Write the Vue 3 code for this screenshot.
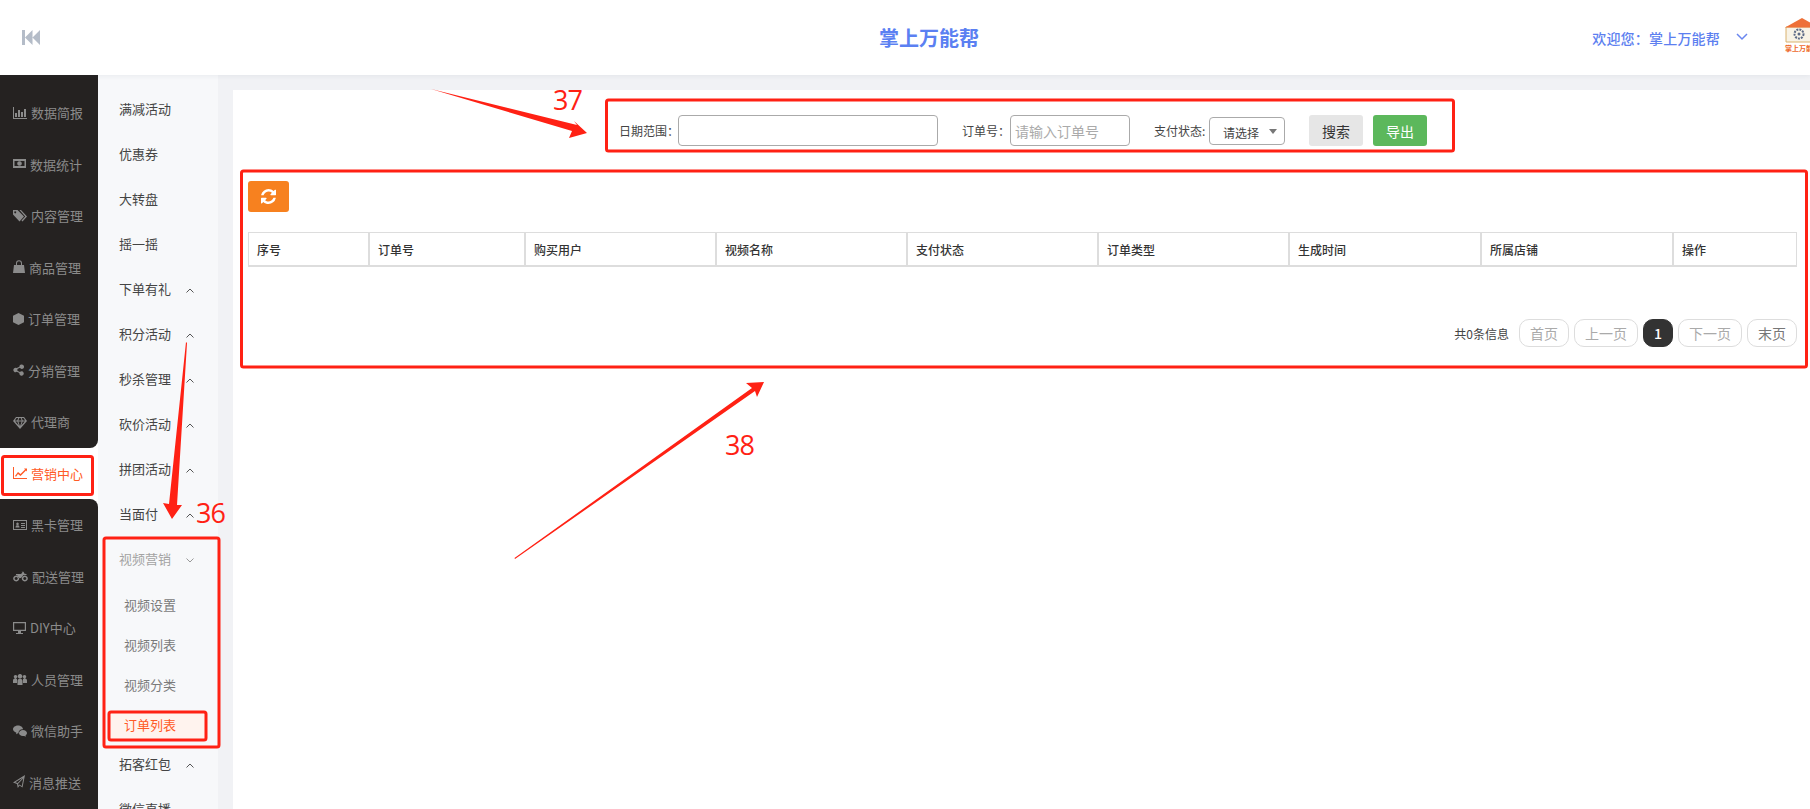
<script setup>
const refreshPath = 'M1511 928q0 5-1 7-64 268-268 434.5t-478 166.5q-146 0-282.5-55t-243.5-157l-129 129q-19 19-45 19t-45-19-19-45v-448q0-26 19-45t45-19h448q26 0 45 19t19 45-19 45l-137 137q71 66 161 102t187 36q134 0 250-65t186-179q11-17 53-117 8-23 30-23h192q13 0 22.5 9.5t9.5 22.5zm25-800v448q0 26-19 45t-45 19h-448q-26 0-45-19t-19-45 19-45l138-138q-148-137-349-137-134 0-250 65t-186 179q-11 17-53 117-8 23-30 23h-199q-13 0-22.5-9.5t-9.5-22.5v-7q65-268 270-434.5t480-166.5q146 0 284 55.5t245 156.5l130-129q19-19 45-19t45 19 19 45z'

const topNav = [
  { label: '数据简报', w: 14, d: 'M0 1h1v11h13v1H0z M2 7h2v4H2z M5 4h2v7H5z M8 6h2v5H8z M11 3h2v8h-2z' },
  { label: '数据统计', w: 13, d: 'M0 2h13v9H0z M1.5 4v5h10V4z M6.5 4.2a2.3 2.3 0 1 0 .01 0z' },
  { label: '内容管理', w: 14, d: 'M0 1h4.5l6.5 6.5-4.5 5L0 5.5z M2.2 2.2a1 1 0 1 0 .01 0z M6.5 1h1.5l6 6.5-4.5 5-1-1 3.7-4z' },
  { label: '商品管理', w: 12, d: 'M1 5h10l1 8H0z M3 5V3.2a3 3 0 0 1 6 0V5H8V3.2a2 2 0 0 0-4 0V5z' },
  { label: '订单管理', w: 11, d: 'M5.5 1l5.5 2.8v6.4L5.5 13 0 10.2V3.8z' },
  { label: '分销管理', w: 11, d: 'M8.8 1.5a2.2 2.2 0 1 1-1.9 3.3L4.3 6.1a2.2 2.2 0 0 1 0 1.7l2.6 1.3a2.2 2.2 0 1 1-.5 1L3.8 8.8a2.2 2.2 0 1 1 0-3.7l2.6-1.3a2.2 2.2 0 0 1 2.4-2.3z' },
  { label: '代理商', w: 14, d: 'M3 2h8l3 4-7 8-7-8z M3.5 3L1.9 5.4h2.3L5.3 3z M6.4 3L5.3 5.4h3.4L7.6 3z M8.7 3l1.1 2.4h2.3L10.5 3z M2.2 6.4l3.6 4.2-1.5-4.2z M5.4 6.4L7 11.3l1.6-4.9z M9.7 6.4l-1.5 4.2 3.6-4.2z' },
]
const bottomNav = [
  { label: '黑卡管理', w: 14, d: 'M0 2h14v10H0z M1 3v8h12V3z M4.5 4.5a1.3 1.3 0 1 0 .01 0z M2.5 9.5c0-1.6.8-2.2 2-2.2s2 .6 2 2.2z M8 5h4v1H8z M8 7h4v1H8z M8 9h4v1H8z' },
  { label: '配送管理', w: 15, d: 'M3.2 6.5a3 3 0 1 0 .01 0z M3.2 8a1.5 1.5 0 1 1-.01 0z M11.8 6.5a3 3 0 1 0 .01 0z M11.8 8a1.5 1.5 0 1 1-.01 0z M3 5h5l1.5-1.5-1-.8h2l1 2 2 .3v1h-3l-2.5 3H5.8C5.6 7.5 4.6 6 3 6z' },
  { label: 'DIY中心', w: 13, d: 'M0 1h13v9H8v2h2v1H3v-1h2v-2H0z M1.2 2.2v6.6h10.600V2.2z' },
  { label: '人员管理', w: 14, d: 'M7 2a2.3 2.3 0 1 0 .01 0z M2.5 3a1.7 1.7 0 1 0 .01 0z M11.5 3a1.7 1.7 0 1 0 .01 0z M0 11V8.5C0 7 1 6.5 2.8 6.5L4 7v4z M14 11V8.5c0-1.5-1-2-2.8-2L10 7v4z M4.5 13V9c0-1.5 1-2.3 2.5-2.3S9.5 7.5 9.5 9v4z' },
  { label: '微信助手', w: 14, d: 'M5 1.5c2.7 0 5 1.7 5 3.8-2.7-.2-4.8 1.6-4.5 4H5l-2 1 .4-1.6C1.5 7.9 0 6.7 0 5.3 0 3.2 2.3 1.5 5 1.5z M10 6c2.2 0 4 1.4 4 3.1 0 1-.6 1.8-1.5 2.4l.3 1.3-1.6-.9c-2.8.7-5.2-.8-5.2-2.8C6 7.4 7.8 6 10 6z' },
  { label: '消息推送', w: 12, d: 'M12 0L9.5 12.5 6.5 10.5 4.8 13 4 9 0 7.5z M9.8 2.8L2.3 7.2l2.3.9z M10.3 3.5L5.2 8.7l-.1 2 1-1.3 2.7 1.7z' },
]
const activeNav = { label: '营销中心', w: 14, d: 'M0 1h1v11h13v1H0z M2 10l3-4 2.5 2L12 3.5l-1-1h3v3l-1-1-5.5 5.5-2.5-2-2 2.8z' }

const subBefore = [
  { label: '满减活动' }, { label: '优惠券' }, { label: '大转盘' }, { label: '摇一摇' },
  { label: '下单有礼', arrow: true }, { label: '积分活动', arrow: true }, { label: '秒杀管理', arrow: true },
  { label: '砍价活动', arrow: true }, { label: '拼团活动', arrow: true }, { label: '当面付', arrow: true },
]
const children = [
  { label: '视频设置' }, { label: '视频列表' }, { label: '视频分类' }, { label: '订单列表', active: true },
]
const subAfter = [{ label: '拓客红包', arrow: true }, { label: '微信直播', arrow: true }]

const columns = [
  { label: '序号', w: 121 }, { label: '订单号', w: 156 }, { label: '购买用户', w: 191 },
  { label: '视频名称', w: 191 }, { label: '支付状态', w: 191 }, { label: '订单类型', w: 191 },
  { label: '生成时间', w: 192 }, { label: '所属店铺', w: 192 }, { label: '操作', w: 124 },
]
const pages = [
  { label: '首页', cls: 'off' }, { label: '上一页', cls: 'off' }, { label: '1', cls: 'cur' },
  { label: '下一页', cls: 'off' }, { label: '末页', cls: 'last' },
]
</script>

<template>
  <div class="page">
    <header class="topbar">
      <svg class="collapse" viewBox="0 0 18 15" width="18" height="15">
        <path d="M0 0h3v15H0z M3 7.5L10.5 0v15z M10.5 7.5L18 0v15z" fill="#b4bcc8" />
      </svg>
      <div class="brand">掌上万能帮</div>
      <div class="welcome">欢迎您：掌上万能帮</div>
      <svg class="user-arrow" viewBox="0 0 12 8" width="12" height="8">
        <path d="M1 1l5 5 5-5" fill="none" stroke="#6a86ef" stroke-width="1.5" />
      </svg>
      <div class="avatar">
        <svg viewBox="0 0 44 44" width="44" height="44">
          <circle cx="22" cy="22" r="22" fill="#fff" />
          <path d="M6 27V12h32v15z" fill="#f8f3e6" stroke="#d9b26e" />
          <path d="M5 12.5L22 3l17 9.5z" fill="#ee7038" />
          <circle cx="19" cy="19" r="4.5" fill="none" stroke="#5c6a86" stroke-width="2" stroke-dasharray="2 1" />
          <circle cx="19" cy="19" r="1.5" fill="#5c6a86" />
        </svg>
        <span class="avatar-text">掌上万能帮</span>
      </div>
    </header>

    <div class="body">
      <aside class="rail">
        <div class="rail-group first">
          <div v-for="item in topNav" :key="item.label" class="rail-item">
            <svg :viewBox="`0 0 ${item.w} 14`" :width="item.w" height="14"><path :d="item.d" fill-rule="evenodd" /></svg>
            <span>{{ item.label }}</span>
          </div>
        </div>
        <div class="rail-item active">
          <svg :viewBox="`0 0 ${activeNav.w} 14`" :width="activeNav.w" height="14"><path :d="activeNav.d" fill-rule="evenodd" /></svg>
          <span>{{ activeNav.label }}</span>
        </div>
        <div class="rail-group second">
          <div v-for="item in bottomNav" :key="item.label" class="rail-item">
            <svg :viewBox="`0 0 ${item.w} 14`" :width="item.w" height="14"><path :d="item.d" fill-rule="evenodd" /></svg>
            <span>{{ item.label }}</span>
          </div>
        </div>
      </aside>

      <nav class="subnav">
        <div v-for="item in subBefore" :key="item.label" class="sub-item">
          <span>{{ item.label }}</span>
          <svg v-if="item.arrow" class="chev" viewBox="0 0 8 5" width="8" height="5"><path d="M.5 4.5L4 1l3.5 3.5" fill="none" stroke="#555" /></svg>
        </div>
        <div class="sub-item open">
          <span>视频营销</span>
          <svg class="chev" viewBox="0 0 8 5" width="8" height="5"><path d="M.5.5L4 4 7.5.5" fill="none" stroke="#999" /></svg>
        </div>
        <div v-for="item in children" :key="item.label" class="child">
          <span class="child-label" :class="{ on: item.active }">{{ item.label }}</span>
        </div>
        <div v-for="item in subAfter" :key="item.label" class="sub-item">
          <span>{{ item.label }}</span>
          <svg class="chev" viewBox="0 0 8 5" width="8" height="5"><path d="M.5 4.5L4 1l3.5 3.5" fill="none" stroke="#555" /></svg>
        </div>
      </nav>

      <main class="content">
        <section class="card">
          <form class="filters" @submit.prevent>
            <label class="flabel date">日期范围：</label>
            <input class="field date-field" />
            <label class="flabel order">订单号：</label>
            <input class="field order-field" placeholder="请输入订单号" />
            <label class="flabel state">支付状态:</label>
            <div class="select"><span>请选择</span><i class="caret"></i></div>
            <button class="btn search">搜索</button>
            <button class="btn export">导出</button>
          </form>

          <button class="refresh">
            <svg viewBox="0 0 1536 1536" width="15" height="15"><path :d="refreshPath" fill="#fff" /></svg>
          </button>

          <table class="grid">
            <colgroup>
              <col v-for="c in columns" :key="c.label" :style="{ width: c.w + 'px' }" />
            </colgroup>
            <thead>
              <tr><th v-for="c in columns" :key="c.label">{{ c.label }}</th></tr>
            </thead>
          </table>

          <div class="pager">
            <span class="total">共0条信息</span>
            <span v-for="p in pages" :key="p.label" class="pg" :class="p.cls">{{ p.label }}</span>
          </div>
        </section>
      </main>
    </div>

    <!-- red review annotations drawn over the screenshot -->
    <svg class="marks" viewBox="0 0 1810 809" width="1810" height="809">
      <g fill="none" stroke="#ff2114" stroke-width="3" stroke-linejoin="round">
        <rect x="2.5" y="456.5" width="90" height="38" rx="2" />
        <rect x="104" y="538" width="115" height="209" rx="2" />
        <rect x="109" y="712" width="97" height="28" rx="2" />
        <rect x="606.5" y="100" width="847" height="51" rx="2" />
        <rect x="241.5" y="171" width="1565" height="196" rx="2" />
      </g>
      <g fill="#ff2114">
        <polygon points="431,89 577,125 574,121 587,133 569,138 572,131" />
        <polygon points="186,342 187,343 177,505 182,505 172,519 163,503 169,504" />
        <polygon points="515,559 514.5,558 752,388 746,383 764,382 757,397 755,391" />
      </g>
    </svg>
    <span class="mark-num n37">37</span>
    <span class="mark-num n36">36</span>
    <span class="mark-num n38">38</span>
  </div>
</template>

<style>
html, body { margin: 0; overflow: hidden; background: #fff; }
</style>

<style scoped>
.page {
  position: relative;
  width: 1810px;
  height: 809px;
  overflow: hidden;
  display: flex;
  flex-direction: column;
  font-family: "Noto Sans CJK SC", "Noto Sans", sans-serif;
  color: #333;
}
.topbar {
  position: relative;
  z-index: 2;
  flex: 0 0 75px;
  height: 75px;
  display: flex;
  align-items: center;
  background: #fff;
  box-shadow: 0 1px 5px rgba(40, 50, 80, .07);
}
.collapse { margin-left: 22px; flex: none; }
.brand {
  position: absolute;
  left: 48px;
  right: 0;
  top: 25px;
  text-align: center;
  font-size: 20px;
  line-height: 26px;
  font-weight: 700;
  color: #5b80f2;
}
.welcome {
  margin-left: auto;
  margin-top: 1px;
  font-size: 14px;
  letter-spacing: .2px;
  line-height: 20px;
  font-weight: 500;
  color: #5d7ff0;
}
.user-arrow { margin-left: 16px; margin-top: -1px; flex: none; }
.avatar {
  position: relative;
  flex: none;
  width: 44px;
  height: 44px;
  margin-left: 32px;
  margin-right: -14px;
  margin-top: -1px;
  border-radius: 50%;
  overflow: hidden;
}
.avatar svg { display: block; }
.avatar-text {
  position: absolute;
  left: 5px;
  top: 29px;
  white-space: nowrap;
  font-size: 7px;
  line-height: 8px;
  font-weight: 700;
  color: #ee6a2c;
}
.body { flex: 1; display: flex; min-height: 0; }

.rail { flex: 0 0 98px; width: 98px; background: #fff; }
.rail-group { background: #252221; }
.rail-group.first { padding-top: 12px; border-bottom-right-radius: 8px; }
.rail-group.second { border-top-right-radius: 8px; height: 320px; }
.rail-item {
  height: 51.5px;
  display: flex;
  align-items: center;
  gap: 4px;
  padding-left: 13px;
  font-size: 13px;
  color: #8b8b8b;
  white-space: nowrap;
}
.rail-item svg { flex: none; fill: #8b8b8b; }
.rail-item.active { color: #ff5a26; background: #fff; }
.rail-item.active svg { fill: #ff5a26; }

.subnav {
  flex: 0 0 120px;
  width: 120px;
  background: #f7f8fa;
  padding-top: 12.5px;
  box-sizing: border-box;
  overflow: hidden;
}
.sub-item {
  position: relative;
  height: 45px;
  box-sizing: border-box;
  padding-bottom: 3px;
  display: flex;
  align-items: center;
  padding-left: 21px;
  font-size: 13px;
  color: #444;
  white-space: nowrap;
}
.sub-item.open { color: #a3a3a3; }
.chev { position: absolute; left: 88px; top: 20px; }
.child {
  height: 40px;
  box-sizing: border-box;
  padding-top: 5px;
  display: flex;
  align-items: center;
}
.child-label {
  width: 99px;
  height: 28px;
  margin-left: 10px;
  padding-left: 16px;
  box-sizing: border-box;
  font-size: 13px;
  line-height: 28px;
  color: #7a7a7a;
}
.child-label.on { background: #fff3ee; color: #ff5a26; }

.content {
  flex: 1;
  min-width: 0;
  padding: 15px 0 0 15px;
  background: #f1f2f5;
}
.card {
  height: 100%;
  box-sizing: border-box;
  background: #fff;
  padding: 25px 13px 0 15px;
}
.filters { display: flex; align-items: center; padding-left: 371px; height: 31px; }
.flabel { font-size: 12px; color: #444; white-space: nowrap; }
.flabel.date { width: 59px; }
.flabel.order { width: 48px; margin-left: 24px; }
.flabel.state { width: 55px; margin-left: 24px; }
.field {
  height: 31px;
  box-sizing: border-box;
  border: 1px solid #aaa;
  border-radius: 4px;
  padding: 0 4px;
  outline: 0;
  background: #fff;
  font: 14px "Noto Sans CJK SC", sans-serif;
}
.field::placeholder { color: #aaa; }
.date-field { width: 260px; }
.order-field { width: 120px; }
.select {
  position: relative;
  width: 76px;
  height: 28px;
  box-sizing: border-box;
  border: 1px solid #aaa;
  border-radius: 4px;
  padding-left: 13px;
  font-size: 12px;
  line-height: 30px;
  color: #444;
}
.caret {
  position: absolute;
  right: 7px;
  top: 11px;
  border: 4px solid transparent;
  border-top: 5px solid #777;
  border-bottom: 0;
}
.btn {
  width: 54px;
  height: 31px;
  border: 0;
  border-radius: 3px;
  padding: 0;
  font: 14px "Noto Sans CJK SC", sans-serif;
}
.search { margin-left: 24px; background: #e6e6e6; color: #333; }
.export { margin-left: 10px; background: #5cb85c; color: #fff; }
.refresh {
  display: flex;
  align-items: center;
  justify-content: center;
  width: 41px;
  height: 31px;
  margin-top: 35px;
  border: 0;
  border-radius: 3px;
  padding: 0;
  background: #f7811f;
}
.grid {
  width: 1549px;
  margin-top: 20px;
  table-layout: fixed;
  border-collapse: separate;
  border-spacing: 0;
}
.grid th {
  height: 35px;
  box-sizing: border-box;
  padding: 0 0 0 8px;
  border: 1px solid #ddd;
  border-bottom-width: 2px;
  text-align: left;
  font-size: 12px;
  font-weight: 500;
  color: #333;
}
.pager {
  display: flex;
  align-items: center;
  justify-content: flex-end;
  width: 1549px;
  margin-top: 52px;
  height: 28px;
}
.total { font-size: 12px; color: #444; margin-right: 5px; }
.pg {
  height: 28px;
  box-sizing: border-box;
  padding: 0 10px;
  margin-left: 5px;
  border: 1px solid #ddd;
  border-radius: 10px;
  font-size: 14px;
  line-height: 26px;
  color: #aaa;
}
.pg.cur {
  width: 30px;
  padding: 0;
  text-align: center;
  border-color: #333;
  background: #333;
  color: #fff;
  font-weight: 500;
}
.pg.last { color: #777; }
.marks { position: absolute; left: 0; top: 0; z-index: 5; pointer-events: none; }
.mark-num {
  position: absolute;
  z-index: 6;
  font-family: "Open Sans", sans-serif;
  font-size: 27px;
  letter-spacing: -1px;
  line-height: 30px;
  color: #ff2114;
}
.n37 { left: 553px; top: 85px; }
.n36 { left: 196px; top: 498px; }
.n38 { left: 725px; top: 430px; }
</style>
